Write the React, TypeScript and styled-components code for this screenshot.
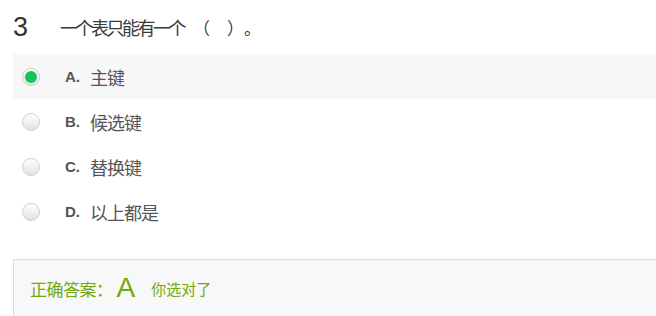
import React from "react";
import styled, { createGlobalStyle } from "styled-components";

const GlobalStyle = createGlobalStyle`
  html, body {
    margin: 0;
    padding: 0;
    background: #fff;
    overflow: hidden;
  }
  body {
    font-family: "Liberation Sans", "Noto Sans CJK SC", sans-serif;
    text-spacing-trim: space-all;
  }
`;

const Page = styled.div`
  padding-left: 13px;
  width: 656px;
  box-sizing: border-box;
`;

const Header = styled.div`
  display: flex;
  align-items: center;
  height: 54px;
`;

const Number = styled.span`
  width: 47px;
  font-size: 27px;
  color: #333;
  line-height: 1;
`;

const Question = styled.span`
  font-family: "Noto Sans CJK SC", sans-serif;
  font-size: 18px;
  letter-spacing: -2.5px;
  color: #3a3a3a;
  white-space: pre;
`;

const Blank = styled.span`
  margin-left: 9px;
  letter-spacing: 0;
  font-size: 17px;
`;

const Options = styled.div`
  display: flex;
  flex-direction: column;
`;

const Option = styled.div<{ $active?: boolean }>`
  display: flex;
  align-items: center;
  height: 45px;
  padding-left: 9px;
  margin-right: -20px;
  background: ${({ $active }) => ($active ? "#f7f7f7" : "transparent")};
`;

const Radio = styled.span<{ $checked?: boolean }>`
  width: 16px;
  height: 16px;
  border-radius: 50%;
  border: 1px solid #cfcfcf;
  box-sizing: content-box;
  display: flex;
  justify-content: center;
  align-items: center;
  background: linear-gradient(#ffffff, #e2e2e2);
  box-shadow: inset 0 1px 1px rgba(255, 255, 255, 0.8);

  &::after {
    content: "";
    display: ${({ $checked }) => ($checked ? "block" : "none")};
    width: 12px;
    height: 12px;
    border-radius: 50%;
    background: #14c65a;
  }
`;

const Letter = styled.span`
  margin-left: 25px;
  width: 25px;
  font-size: 15px;
  font-weight: bold;
  color: #555;
`;

const OptionText = styled.span`
  font-family: "Noto Sans CJK SC", sans-serif;
  font-size: 18px;
  letter-spacing: -1px;
  color: #555;
`;

const Answer = styled.div`
  margin-top: 25px;
  height: 70px;
  margin-right: -20px;
  border: 1px solid #dcdcdc;
  background: #f8f8f8;
  display: flex;
  align-items: center;
  padding-left: 16px;
  padding-bottom: 12px;
  box-sizing: border-box;
  color: #72a80c;
`;

const AnswerLabel = styled.span`
  font-family: "Noto Sans CJK SC", sans-serif;
  font-size: 17px;
  letter-spacing: -0.5px;
`;

const AnswerLetter = styled.span`
  font-size: 28px;
  margin-left: 4px;
  margin-right: 16px;
  line-height: 1;
`;

const Verdict = styled.span`
  font-family: "Noto Sans CJK SC", sans-serif;
  font-size: 15px;
`;

const options = [
  { key: "A", text: "主键" },
  { key: "B", text: "候选键" },
  { key: "C", text: "替换键" },
  { key: "D", text: "以上都是" },
];

const App: React.FC = () => {
  const selected = "A";
  return (
    <Page>
      <GlobalStyle />
      <Header>
        <Number>3</Number>
        <Question>
          一个表只能有一个<Blank>（　）。</Blank>
        </Question>
      </Header>
      <Options>
        {options.map((o) => (
          <Option key={o.key} $active={o.key === selected}>
            <Radio $checked={o.key === selected} />
            <Letter>{o.key}.</Letter>
            <OptionText>{o.text}</OptionText>
          </Option>
        ))}
      </Options>
      <Answer>
        <AnswerLabel>正确答案：</AnswerLabel>
        <AnswerLetter>A</AnswerLetter>
        <Verdict>你选对了</Verdict>
      </Answer>
    </Page>
  );
};

export default App;
